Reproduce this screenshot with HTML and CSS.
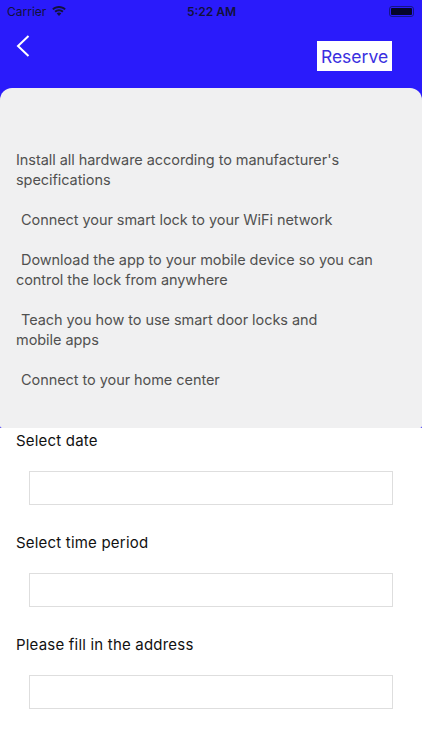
FILE: index.html
```html
<!DOCTYPE html>
<html lang="en">
<head>
<meta charset="utf-8">
<title>Reserve</title>
<link rel="stylesheet" href="styles.css">
</head>
<body>
<div class="top">
  <div class="status">
    <div class="status-left">
      <span>Carrier</span>
      <svg class="wifi" width="14" height="10" viewBox="0 0 14 10"><path d="M7 0C4.400 0 2 1 .2 2.700l1.300 1.400C3 2.700 4.900 1.900 7 1.900s4 .8 5.500 2.200l1.300-1.400C12 1 9.600 0 7 0z M7 3.300c-1.700 0-3.300.7-4.500 1.800l1.300 1.400C4.700 5.700 5.800 5.200 7 5.200s2.300.5 3.200 1.300l1.300-1.400C10.300 4 8.700 3.300 7 3.300z M7 6.600c-.9 0-1.700.3-2.300.9L7 10l2.300-2.500C8.700 6.900 7.900 6.600 7 6.600z" fill="#12123c"/></svg>
    </div>
    <span class="time">5:22 AM</span>
    <div class="battery"><span class="battery-fill"></span></div>
  </div>
  <div class="nav">
    <svg class="back" width="14" height="22" viewBox="0 0 14 22"><path d="M12.500 1 L2 11 L12.500 21" fill="none" stroke="#fff" stroke-width="2"/></svg>
    <button class="reserve">Reserve</button>
  </div>
  <div class="card">
    <p class="line">Install all hardware according to manufacturer's specifications</p>
    <p class="line indent">Connect your smart lock to your WiFi network</p>
    <p class="line"><span class="indent-first">Download the app to your mobile device so you can</span><br>control the lock from anywhere</p>
    <p class="line"><span class="indent-first">Teach you how to use smart door locks and</span><br>mobile apps</p>
    <p class="line indent">Connect to your home center</p>
  </div>
</div>
<form class="form">
  <label class="field-label">Select date</label>
  <div class="field"></div>
  <label class="field-label">Select time period</label>
  <div class="field"></div>
  <label class="field-label">Please fill in the address</label>
  <div class="field"></div>
</form>
</body>
</html>
```

FILE: styles.css
```css
* { box-sizing: border-box; }
html, body { margin: 0; padding: 0; }
body {
  width: 422px;
  height: 750px;
  overflow: hidden;
  background: #fff;
  font-family: Inter, "Noto Sans", "Liberation Sans", sans-serif;
}
.top { background: #2a1bfb; }
.status {
  height: 22px;
  padding: 0 8px 0 7px;
  display: grid;
  grid-template-columns: 1fr auto 1fr;
  align-items: center;
  font-size: 12px;
  color: #12123c;
}
.status-left { display: flex; align-items: center; gap: 6px; }
.wifi { display: block; margin-top: -1px; }
.time { font-weight: 600; font-size: 12px; margin-left: 2px; }
.battery {
  justify-self: end;
  width: 25px;
  height: 11px;
  border: 1px solid #14148a;
  border-radius: 3px;
  padding: 1px;
  display: flex;
}
.battery-fill { flex: 1; background: #05052a; border-radius: 1px; }
.nav {
  height: 66px;
  padding: 13px 30px 0 16px;
  display: flex;
  justify-content: space-between;
  align-items: flex-start;
}
.back { display: block; }
.reserve {
  margin-top: 6px;
  width: 75px;
  height: 30px;
  padding: 0;
  border: 0;
  background: #fff;
  color: #3a2fe0;
  font: 400 17.500px Inter, "Noto Sans", sans-serif;
}
.card {
  height: 340px;
  padding: 62px 40px 0 16px;
  background: #f0f0f1;
  border-radius: 12px 12px 2px 2px;
  color: #505050;
  font-size: 14.500px;
  line-height: 20px;
  letter-spacing: -0.06px;
}
.line { margin: 0 0 20px; }
.line:first-child { margin-right: -10px; }
.line:nth-child(3) { margin-right: -20px; }
.indent { padding-left: 5px; }
.indent-first { padding-left: 5px; }
.form { padding: 3px 29px 0 16px; }
.field-label {
  display: block;
  height: 20px;
  line-height: 20px;
  font-size: 15px;
  letter-spacing: 0.2px;
  color: #111;
}
.field {
  height: 34px;
  margin: 20px 0 28px 13px;
  background: #fff;
  border: 1px solid #dedede;
}
```
